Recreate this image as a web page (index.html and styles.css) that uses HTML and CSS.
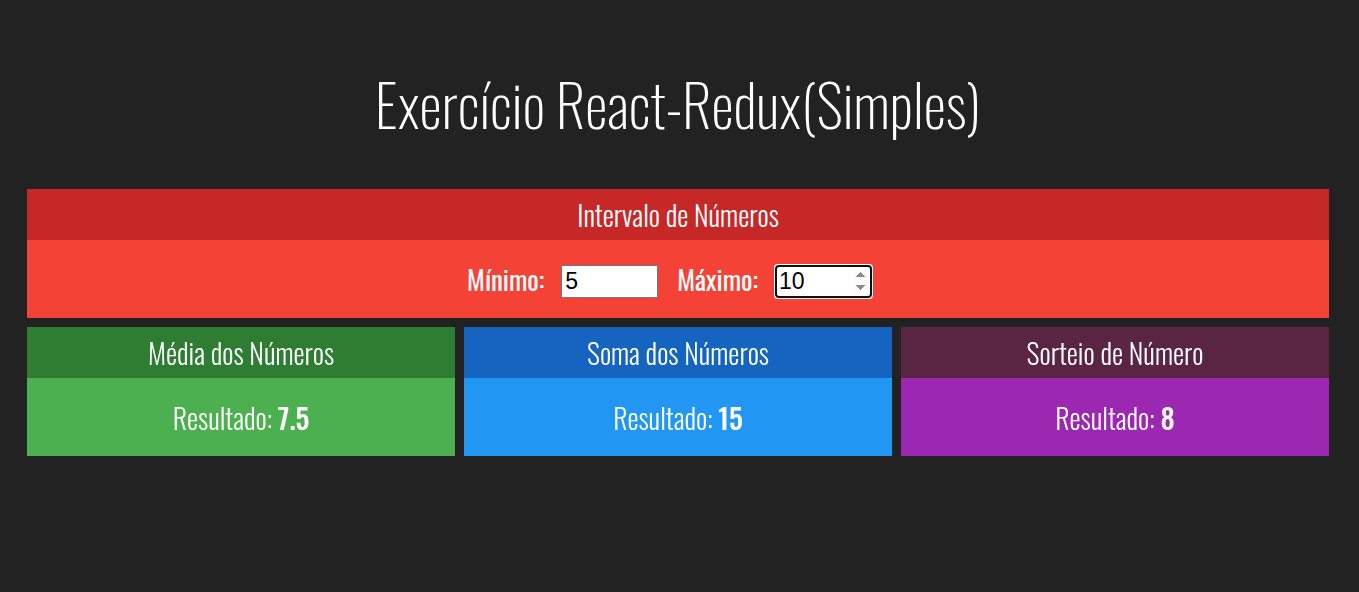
FILE: index.html
```html
<!DOCTYPE html>
<html lang="pt-BR">
<head>
<meta charset="utf-8">
<title>Exercício React-Redux(Simples)</title>
<link rel="stylesheet" href="styles.css">
</head>
<body>
<div class="app">
  <h1 class="title">Exercício React-Redux(Simples)</h1>
  <section class="panel">
    <div class="panel-header red-dark">Intervalo de Números</div>
    <div class="panel-body red">
      <div class="interval">
        <label class="field-label" for="min">Mínimo:</label>
        <input class="field" id="min" type="number" value="5">
        <label class="field-label" for="max">Máximo:</label>
        <input class="field" id="max" type="number" value="10" autofocus>
      </div>
    </div>
  </section>
  <div class="cards">
    <section class="panel">
      <div class="panel-header green-dark">Média dos Números</div>
      <div class="panel-body green"><span class="result">Resultado: <strong>7.5</strong></span></div>
    </section>
    <section class="panel">
      <div class="panel-header blue-dark">Soma dos Números</div>
      <div class="panel-body blue"><span class="result">Resultado: <strong>15</strong></span></div>
    </section>
    <section class="panel">
      <div class="panel-header purple-dark">Sorteio de Número</div>
      <div class="panel-body purple"><span class="result">Resultado: <strong>8</strong></span></div>
    </section>
  </div>
</div>
</body>
</html>
```
FILE: styles.css
```css
html, body {
  margin: 0;
  padding: 0;
  background: #222222;
}
body {
  color: #ffffff;
  font-family: "Oswald", "Open Sans", sans-serif;
  font-weight: 300;
}
.app {
  width: 1302px;
  margin: 0 0 0 27px;
  padding-top: 60px;
}
.title {
  margin: 0 0 43px 0;
  font-size: 58px;
  font-weight: 200;
  text-align: center;
  line-height: normal;
}
.panel {
  display: flex;
  flex-direction: column;
}
.panel-header {
  height: 51px;
  display: flex;
  align-items: center;
  justify-content: center;
  font-size: 28px;
  font-weight: 300;
}
.panel-body {
  height: 78px;
  display: flex;
  align-items: center;
  justify-content: center;
  font-size: 28px;
  font-weight: 300;
}
.red-dark { background: #c62828; }
.red { background: #f44336; }
.green-dark { background: #2e7d32; }
.green { background: #4caf50; }
.blue-dark { background: #1565c0; }
.blue { background: #2196f3; }
.purple-dark { background: #5a2543; }
.purple { background: #9c27b0; }

.interval {
  display: flex;
  align-items: center;
  padding-right: 17px;
}
.field-label {
  font-weight: 400;
  font-size: 27px;
  margin-right: 17px;
}
.field {
  box-sizing: border-box;
  width: 97px;
  height: 33px;
  margin-top: 5px;
  padding: 1px 3px;
  border: 1px solid #767676;
  border-radius: 0;
  background: #fff;
  color: #000;
  font-family: "Liberation Sans", Arial, sans-serif;
  font-size: 23px;
  margin-right: 19px;
}
.field:last-child {
  margin-right: 0;
}
.cards {
  display: grid;
  grid-template-columns: repeat(3, 1fr);
  gap: 9px;
  margin-top: 9px;
}
.result strong {
  font-weight: 500;
}
```
